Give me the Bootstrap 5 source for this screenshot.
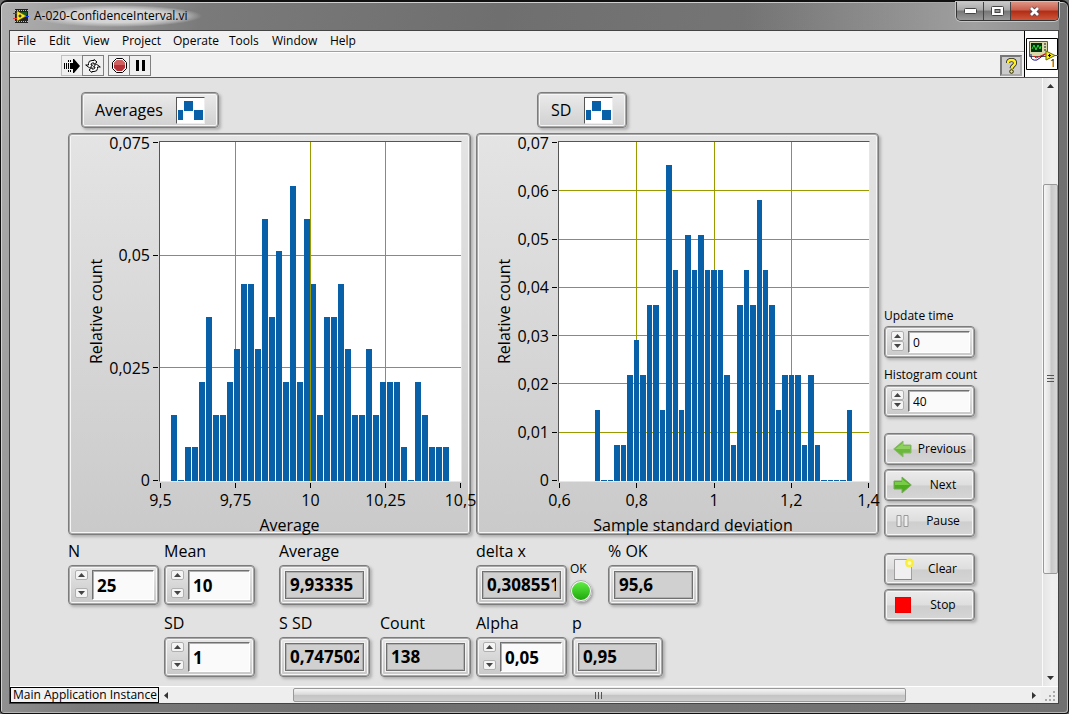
<!DOCTYPE html>
<html lang="en">
<head>
<meta charset="utf-8">
<meta name="viewport" content="width=device-width, initial-scale=1">
<title>A-020-ConfidenceInterval.vi</title>
<link href="https://cdn.jsdelivr.net/npm/bootstrap@5.3.0/dist/css/bootstrap.min.css" rel="stylesheet">
<style>
  body { font: 12px/16px "Open Sans", "Noto Sans", sans-serif; color: #000; background: #707070; }
  .vi-window {
    height: 100vh; min-height: 700px; padding: 0 9px 9px 8px; border: 1px solid #111; border-top-width: 2px;
    border-radius: 7px 7px 4px 4px; box-shadow: inset 1px 1px 0 #d0d0d0, inset -1px -1px 0 #b4b4b4;
    background: linear-gradient(100deg, #b0b0b0 0, #a2a2a2 60px, #7a7a7a 200px, #6f6f6f 42%, #747474 60%, #707070 100%);
  }
  .vi-title { height: 28px; background: linear-gradient(90deg, transparent 70%, #a0a0a0 92%, #8c8c8c); }
  .vi-name { padding: 3px 14px 3px 5px; margin-right: -10px; background: radial-gradient(closest-side, #dcdcdc, #d2d2d2 60%, #c0c0c0a0 85%, transparent); }
  .caption-group { border: 1px solid #333; border-top: 0; border-radius: 0 0 5px 5px; overflow: hidden; box-shadow: 0 0 0 1px #c4c4c4; }
  .caption-btn { height: 18px; width: 27px; padding: 0; border: 0; border-right: 1px solid #444; background: linear-gradient(#c8c8c8, #a8a8a8 45%, #767676 50%, #999); display: grid; place-items: center; }
  .caption-btn.close-btn { width: 47px; border: 0; background: linear-gradient(#dc9484, #c95f4c 45%, #b02c14 50%, #d0553a); }
  .client { border: 1px solid #444; background: #e2e2e2; min-height: 0; }
  .vi-menu { height: 21px; padding: 0 7px; background: #f0f0f0; border-bottom: 1px solid #a0a0a0; }
  .vi-menu a { color: #000; text-decoration: none; }
  .vi-tools { height: 25px; background: #f0f0f0; border-top: 1px solid #fff; padding: 2px 2px 1px 51px; }
  .vi-head { border-bottom: 1px solid #555; height: 47px; background: #fff; }
  .tool-btn { width: 22px; height: 21px; padding: 0; border: 1px solid #808080; background: #f0f0f0; display: grid; place-items: center; }
  .tool-btn + .tool-btn { margin-left: -1px; }
  .tool-btn.flat { border-color: #c0c0c0; }
  .tool-btn.help { border-width: 2px; border-color: #777 #aaa #aaa #777; background: #ccc; }
  .vi-icon { width: 34px; border-left: 1px solid #000; }

  .panel { display: grid; grid-template: 36px auto auto / minmax(0,1fr) minmax(0,1fr) 91px; gap: 5px; padding: 14px 67px 0 58px; align-content: start; background: #e2e2e2; overflow: hidden; }
  .raised { border: 1px solid #7c7c7c; border-radius: 4px; color: #000; background: linear-gradient(#ececec, #dedede 50%, #cecece 53%, #d6d6d6); box-shadow: inset 0 0 0 1px #a8a8a8, inset 0 0 0 2px #f6f6f6, 2px 2px 3px #b0b0b0; }
  .legend-box { font-size: 16px; line-height: 20px; padding: 0 13px; gap: 13px; background: linear-gradient(#ebebeb, #d0d0d0); }
  .avg-legend { margin-left: 13px; }
  .sd-legend { margin-left: 61px; }
  .swatch { border: 1px solid; border-color: #555 #eee #eee #555; background: #fff; }

  .chart { padding: 7px 8px 0 1px; height: 402px; background: linear-gradient(#e4e4e4, #cacaca); font-size: 16px; line-height: 20px;
    display: grid; grid-template: 341px 1fr / 89px minmax(0,1fr); }
  .chart.narrow-axis { grid-template-columns: 80px minmax(0,1fr); }
  .y-side { padding: 1px 0; }
  .y-name { width: 20px; margin-left: 16px; writing-mode: vertical-rl; transform: rotate(180deg); text-align: center; }
  .y-ticks { padding-right: 1px; }
  .y-ticks span { height: 1px; display: flex; align-items: center; justify-content: flex-end; }
  .y-ticks span::after { content: ""; width: 5px; height: 1px; background: #000; margin-left: 3px; }
  .plot { border: 1px solid; border-color: #555 #e6e6e6 #e6e6e6 #555; background: #fff; }
  .grid-line { stroke: #999900; stroke-width: 1px; vector-effect: non-scaling-stroke; fill: none; }
  .x-side { grid-column: 2; padding: 1px 1px 0; }
  .x-ticks span { width: 1px; display: flex; flex-direction: column; align-items: center; white-space: nowrap; }
  .x-ticks span::before { content: ""; width: 1px; height: 5px; background: #000; margin-bottom: 2px; }
  .x-name { margin: 5px 0 0 -42px; text-align: center; }

  .readouts { display: grid; row-gap: 7px; font-size: 16px; align-items: start; }
  .avg-readouts { grid-template-columns: 96px 115px 101px 91px; }
  .sd-readouts { grid-template-columns: 91px 5px 36px 91px; }
  .readouts label { line-height: 22px; height: 25px; display: block; white-space: nowrap; }
  .box { width: 91px; height: 40px; padding: 4px 4px 4px 6px; gap: 4px; background: linear-gradient(#e6e6e6, #c8c8c8); }
  .field { border: 1px solid; border-color: #707070 #fff #fff #707070; border-radius: 0; background: #fafafa; color: #000; font: bold 17px/28px "Open Sans", sans-serif; height: 30px; width: 62px; padding: 0 4px; min-width: 0; outline: 0; box-shadow: inset 1px 1px 0 #b0b0b0; }
  .box.show { padding: 5px; }
  .box.show .field { width: 100%; height: 28px; line-height: 26px; background: #d0d0d0; border-color: #707070; box-shadow: 0 0 0 1px #f2f2f2, inset 0 0 0 1px #b0b0b0; }
  .field span { display: block; overflow: hidden; }
  .spin { height: 28px; width: 13px; }
  .spin button { width: 13px; height: 10px; padding: 0; border: 1px solid #b0b0b0; border-radius: 2px; background: #f4f4f4; display: grid; place-items: center; }
  .box.small-box { height: 32px; }
  .small-box .field { font: 12px/18px "Open Sans", sans-serif; height: 22px; }
  .small-box .spin { height: 20px; }
  .led { width: 22px; height: 22px; border-radius: 50%; border: 2px solid #f4f4f4; outline: 1px solid #aaa; outline-offset: -1px; background: linear-gradient(#5fec42, #1fa80c); box-shadow: 1px 2px 3px #999; margin-top: 3px; }
  .led-cell { width: 22px; font-size: 12px; margin: 21px 0 0 -2px; }
  .readouts .led-cell label { height: 16px; line-height: 16px; }

  .side { grid-row: 1 / 4; grid-column: 3; padding-top: 216px; white-space: nowrap; }
  .side label { margin-bottom: 2px; }
  .small-box { margin-bottom: 9px; }
  .cmd { height: 32px; width: 91px; padding: 0 8px; margin-bottom: 4px; font: 12px/16px "Open Sans", sans-serif; }
  .small-box + .cmd { margin-top: 16px; }
  .cmd svg { flex: none; }

  .v-scroll { width: 16px; border-left: 1px solid #fafafa; background: linear-gradient(90deg, #e4e4e4, #f0f0f0 60%, #eee); }
  .h-scroll { background: #eee; }
  .v-thumb { flex: 390 0 0; border: 1px solid #999; border-radius: 2px; background: linear-gradient(90deg, #f6f6f6, #e0e0e0 48%, #c6c6c6 52%, #d8d8d8); }
  .h-thumb { flex: 614 0 0; border: 1px solid #999; border-radius: 2px; background: linear-gradient(#f6f6f6, #dadada 45%, #c4c4c4 52%, #cecece); margin: 1px 0; }
  .arrow-btn { border: 0; padding: 0; background: none; width: 15px; height: 16px; display: grid; place-items: center; }
  .vi-foot { height: 17px; border-top: 1px solid #fff; background: #ececec; }
  .instance { border: 1px solid #000; background: #f2f2f2; line-height: 14px; white-space: nowrap; padding: 0 1px 0 2px; }
</style>
</head>
<body>
<div class="vi-window d-flex flex-column">
  <header class="vi-title d-flex align-items-start flex-shrink-0">
    <div class="d-flex align-items-center h-100">
      <svg class="ms-1" width="16" height="14" viewBox="0 0 16 14"><path fill="#222" d="M2 0h13v14H2z"/><path stroke="#bbb" stroke-dasharray="1 1" d="M2 1.500h13M2 12.500h13"/><path fill="#1b5b25" d="M8 3h6v3H8z"/><path stroke="#2040ff" d="M0 4.500h4"/><path stroke="#f33" d="M0 9.500h4"/><path stroke="#2040ff" d="M12 7.500h4"/><path fill="#ffec20" stroke="#a80" stroke-width=".5" d="M4 2v10l9-5z"/><path stroke="#000" d="M5.500 7h3M7 5.500v3"/></svg>
      <span class="vi-name">A-020-ConfidenceInterval.vi</span>
    </div>
    <div class="caption-group d-flex ms-auto">
      <button class="caption-btn" aria-label="Minimize"><svg width="13" height="6"><rect x=".5" y=".5" width="12" height="5" rx="1" fill="#fff" stroke="#444"/></svg></button>
      <button class="caption-btn" aria-label="Maximize"><svg width="13" height="11"><rect x=".5" y=".5" width="12" height="9" rx="1" fill="#fff" stroke="#444"/><rect x="4" y="3.500" width="5" height="3" fill="#999" stroke="#444"/></svg></button>
      <button class="caption-btn close-btn" aria-label="Close"><svg width="13" height="11" viewBox="0 0 13 11"><path d="M3 2l7 7M10 2l-7 7" stroke="#545" stroke-width="4.500"/><path d="M3 2l7 7M10 2l-7 7" stroke="#fff" stroke-width="2.800"/></svg></button>
    </div>
  </header>

  <div class="client d-flex flex-column flex-fill">
    <div class="vi-head d-flex flex-shrink-0">
      <div class="flex-fill">
        <nav class="vi-menu d-flex align-items-center">
          <a href="#" style="width:32px">File</a><a href="#" style="width:34px">Edit</a><a href="#" style="width:39px">View</a><a href="#" style="width:51px">Project</a><a href="#" style="width:56px">Operate</a><a href="#" style="width:43px">Tools</a><a href="#" style="width:58px">Window</a><a href="#">Help</a>
        </nav>
        <div class="vi-tools d-flex">
          <button class="tool-btn flat" aria-label="Run"><svg width="16" height="14" viewBox="0 0 16 14"><path d="M6 4h3V0h1l6 7-6 7H9v-4H6z"/><path d="M.5 4v6M2.500 4v6M4.500 4v6" stroke="#000"/><path d="M4.500 1v2M6.500 1v2M4.500 11v2M6.500 11v2" stroke="#000"/></svg></button>
          <button class="tool-btn" aria-label="Run continuously"><svg width="16" height="14" viewBox="0 0 16 14"><g fill="#fff" stroke="#000"><path d="M3.500 6V4.500Q3.500 1.500 7 1.500h2V.5L12 3 9 5.500V4H7.500Q6 4 6 6h1.500L4.800 9 .7 6z"/><path d="M12.500 8v1.500q0 3-3.500 3H7v1L4 11l3-2.500V10h1.500q1.500 0 1.500-2H8.500l2.700-3 4.100 3z"/></g></svg></button>
          <button class="tool-btn ms-1" aria-label="Abort"><svg width="15" height="15" viewBox="0 0 15 15"><path d="M4.500.5h6l4 4v6l-4 4h-6l-4-4v-6z" fill="#fff" stroke="#000"/><path d="M5 2h5l3 3v5l-3 3H5l-3-3V5z" fill="#b83038"/><path d="M5 2h5l3 3v2H2V5z" fill="#d06060"/></svg></button>
          <button class="tool-btn" aria-label="Pause execution"><svg width="10" height="11"><path d="M1 0h3v11H1zM7 0h3v11H7z"/></svg></button>
          <button class="tool-btn help ms-auto" aria-label="Context help"><svg width="13" height="16" viewBox="0 0 13 16"><path d="M3 5q0-3 3.500-3T10 5q0 1.500-1.500 2.500T6.500 10.500" fill="none" stroke="#222" stroke-width="4"/><path d="M3 5q0-3 3.500-3T10 5q0 1.500-1.500 2.500T6.500 10.500" fill="none" stroke="#ffef20" stroke-width="2.400"/><circle cx="6.500" cy="13.500" r="1.800" fill="#ffef20" stroke="#222"/></svg></button>
        </div>
      </div>
      <div class="vi-icon d-grid align-items-center justify-content-center flex-shrink-0">
        <svg width="32" height="32" viewBox="0 0 32 32"><path d="M.5.5h31v31H.5z" fill="#fff" stroke="#000"/><path d="M3.500 3.500h18v15h-18z" fill="#d8d8a8" stroke="#555"/><path d="M5 5h11v9H5z" fill="#031"/><path d="M6 11l2-4 2 5 2-5 2 4 1-3" fill="none" stroke="#3d3"/><path d="M18 6h2M18 9h2M18 12h2" stroke="#555" stroke-width="1.500"/><path d="M5 16v2q0 5 6 4l8-6" fill="none" stroke="#118"/><path d="M8 18l2 2 9-4h3" fill="none" stroke="#e11"/><path d="M20 13v9l9-4.500z" fill="#ffec20" stroke="#660"/><path d="M29 17.500h3" stroke="#e11"/><path d="M22 17.500h3M23.500 16v3" stroke="#000"/><text x="24" y="29" font-size="10">1</text></svg>
      </div>
    </div>

    <div class="d-flex flex-fill overflow-hidden">
      <main class="panel flex-fill">
        <div class="d-flex">
          <div class="raised legend-box avg-legend d-flex align-items-center"><span>Averages</span>
            <svg class="swatch" width="29" height="27"><path fill="#0860a8" d="M1 12h5v10H1zM7 3h9v10H7zM17 12h9v10h-9z"/></svg></div>
        </div>
        <div class="d-flex">
          <div class="raised legend-box sd-legend d-flex align-items-center"><span>SD</span>
            <svg class="swatch" width="29" height="27"><path fill="#0860a8" d="M1 12h5v10H1zM7 3h9v10H7zM17 12h9v10h-9z"/></svg></div>
        </div>

        <section class="raised chart">
          <div class="y-side d-flex">
            <div class="y-name">Relative count</div>
            <div class="y-ticks d-flex flex-column justify-content-between flex-fill"><span>0,075</span><span>0,05</span><span>0,025</span><span>0</span></div>
          </div>
          <div class="plot"><svg id="avgPlot" class="d-block w-100 h-100" viewBox="0 0 301 339" preserveAspectRatio="none" shape-rendering="crispEdges"></svg></div>
          <div class="x-side">
            <div class="x-ticks d-flex justify-content-between"><span>9,5</span><span>9,75</span><span>10</span><span>10,25</span><span>10,5</span></div>
            <div class="x-name">Average</div>
          </div>
        </section>

        <section class="raised chart narrow-axis">
          <div class="y-side d-flex">
            <div class="y-name">Relative count</div>
            <div class="y-ticks d-flex flex-column justify-content-between flex-fill"><span>0,07</span><span>0,06</span><span>0,05</span><span>0,04</span><span>0,03</span><span>0,02</span><span>0,01</span><span>0</span></div>
          </div>
          <div class="plot"><svg id="sdPlot" class="d-block w-100 h-100" viewBox="0 0 310 339" preserveAspectRatio="none" shape-rendering="crispEdges"></svg></div>
          <div class="x-side">
            <div class="x-ticks d-flex justify-content-between"><span>0,6</span><span>0,8</span><span>1</span><span>1,2</span><span>1,4</span></div>
            <div class="x-name">Sample standard deviation</div>
          </div>
        </section>

        <div class="readouts avg-readouts">
          <div><label for="n">N</label><div class="raised box d-flex"><div class="spin d-flex flex-column justify-content-between"><button aria-label="Increase N"><svg width="7" height="4"><path fill="#444" d="M0 4l3.500-4L7 4z"/></svg></button><button aria-label="Decrease N"><svg width="7" height="4"><path fill="#444" d="M0 0l3.500 4L7 0z"/></svg></button></div><input id="n" class="field" value="25"></div></div>
          <div><label for="mean">Mean</label><div class="raised box d-flex"><div class="spin d-flex flex-column justify-content-between"><button aria-label="Increase mean"><svg width="7" height="4"><path fill="#444" d="M0 4l3.500-4L7 4z"/></svg></button><button aria-label="Decrease mean"><svg width="7" height="4"><path fill="#444" d="M0 0l3.500 4L7 0z"/></svg></button></div><input id="mean" class="field" value="10"></div></div>
          <div><label for="average">Average</label><div class="raised box show d-flex"><output id="average" class="field"><span>9,93335</span></output></div></div>
          <div></div>
          <div></div>
          <div><label for="sd">SD</label><div class="raised box d-flex"><div class="spin d-flex flex-column justify-content-between"><button aria-label="Increase SD"><svg width="7" height="4"><path fill="#444" d="M0 4l3.500-4L7 4z"/></svg></button><button aria-label="Decrease SD"><svg width="7" height="4"><path fill="#444" d="M0 0l3.500 4L7 0z"/></svg></button></div><input id="sd" class="field" value="1"></div></div>
          <div><label for="ssd">S SD</label><div class="raised box show d-flex"><output id="ssd" class="field"><span>0,747502</span></output></div></div>
          <div><label for="count">Count</label><div class="raised box show d-flex"><output id="count" class="field"><span>138</span></output></div></div>
        </div>

        <div class="readouts sd-readouts">
          <div><label for="dx">delta x</label><div class="raised box show d-flex"><output id="dx" class="field"><span>0,308551</span></output></div></div>
          <div></div>
          <div class="led-cell"><label for="ok">OK</label><output id="ok" class="led d-block"></output></div>
          <div><label for="pok">% OK</label><div class="raised box show d-flex"><output id="pok" class="field"><span>95,6</span></output></div></div>
          <div><label for="alpha">Alpha</label><div class="raised box d-flex"><div class="spin d-flex flex-column justify-content-between"><button aria-label="Increase alpha"><svg width="7" height="4"><path fill="#444" d="M0 4l3.500-4L7 4z"/></svg></button><button aria-label="Decrease alpha"><svg width="7" height="4"><path fill="#444" d="M0 0l3.500 4L7 0z"/></svg></button></div><input id="alpha" class="field" value="0,05"></div></div>
          <div></div>
          <div><label for="p">p</label><div class="raised box show d-flex"><output id="p" class="field"><span>0,95</span></output></div></div>
        </div>

        <aside class="side">
          <label for="upd" class="d-block">Update time</label>
          <div class="raised box small-box d-flex"><div class="spin d-flex flex-column"><button aria-label="Increase update time"><svg width="7" height="4"><path fill="#444" d="M0 4l3.500-4L7 4z"/></svg></button><button aria-label="Decrease update time"><svg width="7" height="4"><path fill="#444" d="M0 0l3.500 4L7 0z"/></svg></button></div><input id="upd" class="field" value="0"></div>
          <label for="hist" class="d-block">Histogram count</label>
          <div class="raised box small-box d-flex"><div class="spin d-flex flex-column"><button aria-label="Increase histogram count"><svg width="7" height="4"><path fill="#444" d="M0 4l3.500-4L7 4z"/></svg></button><button aria-label="Decrease histogram count"><svg width="7" height="4"><path fill="#444" d="M0 0l3.500 4L7 0z"/></svg></button></div><input id="hist" class="field" value="40"></div>
          <button class="raised cmd d-flex align-items-center justify-content-between"><svg width="19" height="18" viewBox="0 0 19 18"><path d="M.7 9L10 1v4h8v8h-8v4z" fill="#6cb83c" stroke="#8cb870"/><path d="M2 9l8-6v3h7v3z" fill="#8fd060"/></svg>Previous</button>
          <button class="raised cmd d-flex align-items-center"><svg width="19" height="18" viewBox="0 0 19 18"><path d="M18.300 9L9 1v4H1v8h8v4z" fill="#4cae1c" stroke="#7ca860"/><path d="M17 9L9 3v3H2v3z" fill="#78cc48"/></svg><span class="flex-fill text-center ps-2">Next</span></button>
          <button class="raised cmd d-flex align-items-center"><svg width="19" height="14" viewBox="0 0 19 14"><path d="M4 1.500h4v11H4zM11 1.500h4v11h-4z" fill="#eee" stroke="#999"/></svg><span class="flex-fill text-center ps-2">Pause</span></button>
          <button class="raised cmd d-flex align-items-center mt-3"><svg width="22" height="24" viewBox="0 0 22 24"><path d="M1.500 2.500h17v20h-17z" fill="#f0f0f0" stroke="#a0a0a0"/><path d="M1 22.500h18" stroke="#888"/><circle cx="16.500" cy="6" r="4.500" fill="#f8ee40"/><circle cx="16.500" cy="6" r="2" fill="#fffcb0"/></svg><span class="flex-fill text-center ps-1">Clear</span></button>
          <button class="raised cmd d-flex align-items-center"><svg width="19" height="18"><path d="M2 1h16v16H2z" fill="#e00"/><path d="M3 2h14v14H3z" fill="#f00"/></svg><span class="flex-fill text-center ps-2">Stop</span></button>
        </aside>
      </main>

      <div class="v-scroll d-flex flex-column flex-shrink-0">
        <button class="arrow-btn" aria-label="Scroll up"><svg width="7" height="4"><path fill="#333" d="M0 4l3.500-4L7 4z"/></svg></button>
        <div style="flex:90 0 0"></div>
        <div class="v-thumb d-grid align-items-center justify-content-center"><svg width="7" height="8"><path d="M0 .5h7M0 3.500h7M0 6.500h7" stroke="#555"/></svg></div>
        <div style="flex:97 0 0"></div>
        <button class="arrow-btn" aria-label="Scroll down"><svg width="7" height="4"><path fill="#333" d="M0 0l3.500 4L7 0z"/></svg></button>
      </div>
    </div>

    <footer class="vi-foot d-flex flex-shrink-0">
      <div class="instance flex-shrink-0">Main Application Instance</div>
      <div class="h-scroll d-flex flex-fill">
        <button class="arrow-btn" aria-label="Scroll left"><svg width="4" height="7"><path fill="#333" d="M4 0L0 3.500 4 7z"/></svg></button>
        <div style="flex:119 0 0"></div>
        <div class="h-thumb d-grid align-items-center justify-content-center"><svg width="8" height="7"><path d="M.5 0v7M3.500 0v7M6.500 0v7" stroke="#555"/></svg></div>
        <div style="flex:120 0 0"></div>
        <button class="arrow-btn" aria-label="Scroll right"><svg width="4" height="7"><path fill="#333" d="M0 0l4 3.500L0 7z"/></svg></button>
      </div>
      <svg width="17" height="16"><path fill="#aaa" d="M12 4h2v2h-2zM12 8h2v2h-2zM8 8h2v2H8zM12 12h2v2h-2zM8 12h2v2H8zM4 12h2v2H4z"/></svg>
    </footer>
  </div>
</div>
<script src="https://cdn.jsdelivr.net/npm/bootstrap@5.3.0/dist/js/bootstrap.bundle.min.js"></script>
<script>
  // Each histogram holds 40 bins; a bin's value is the number of samples in it.
  const averages = [2,0,1,1,3,5,2,2,3,4,6,6,4,8,5,7,3,9,3,8,6,2,5,5,6,4,2,2,4,2,3,3,3,1,0,3,2,1,1,1];
  const deviations = [2,0,0,1,1,3,4,3,5,5,2,9,6,2,7,6,7,6,6,6,3,1,5,6,5,8,6,5,2,3,3,3,1,3,1,0,0,0,0,2];

  function drawHistogram(id, bins, width, xLines, yLines, start, pitch, unit) {
    const lines = xLines.map(x => `M${x + 0.5} 0V339`).concat(yLines.map(y => `M0 ${y + 0.5}H${width}`));
    let shapes = `<path class="grid-line" d="${lines.join('')}"/><g fill="#0860a8">`;
    bins.forEach((count, i) => {
      const x = Math.round(start + i * pitch);
      const w = Math.round(start + (i + 1) * pitch) - x - 1;
      const h = Math.round(count * unit) + 1;
      shapes += `<rect x="${x}" y="${339 - h}" width="${w}" height="${h}"/>`;
    });
    document.getElementById(id).innerHTML = shapes + '</g>';
  }
  drawHistogram('avgPlot', averages, 301, [75, 150, 225], [113, 225], 11, 6.975, 32.66);
  drawHistogram('sdPlot', deviations, 310, [77, 155, 232], [48, 97, 145, 193, 241, 290], 36, 6.46, 34.99);
</script>
</body>
</html>
